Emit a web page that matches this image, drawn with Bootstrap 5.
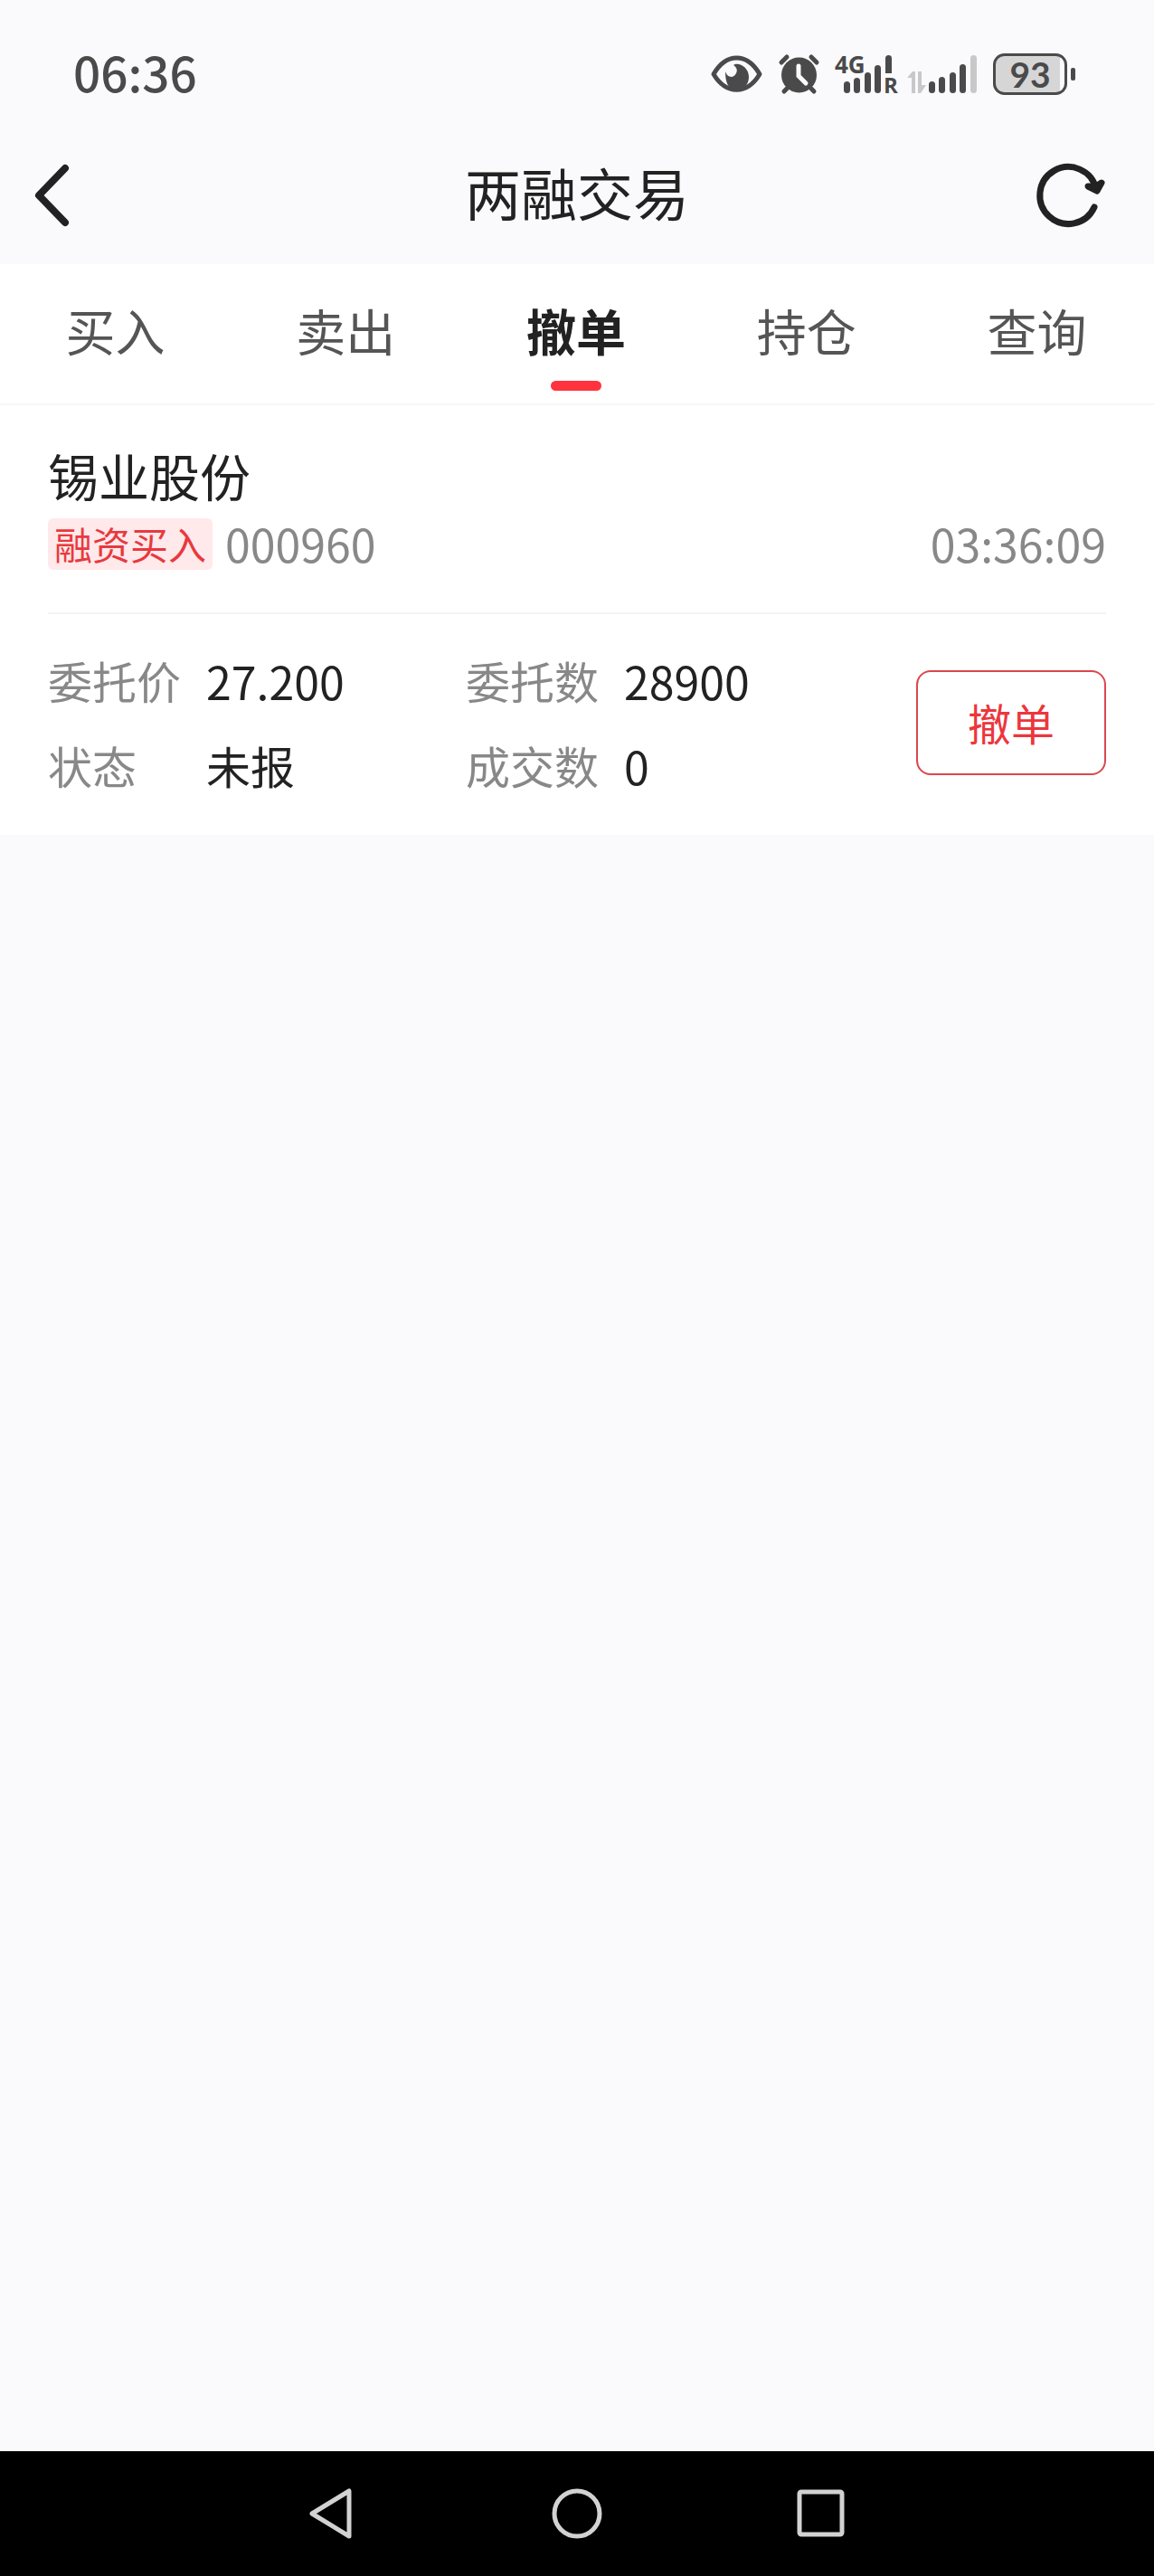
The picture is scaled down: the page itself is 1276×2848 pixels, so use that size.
<!DOCTYPE html>
<html lang="zh-CN">
<head>
<meta charset="utf-8">
<meta name="viewport" content="width=device-width, initial-scale=1">
<title>两融交易</title>
<link href="https://cdn.jsdelivr.net/npm/bootstrap@5.3.0/dist/css/bootstrap.min.css" rel="stylesheet">
<style>
  body { background: #fafafc; color: #222; font-family: "Noto Sans CJK SC", sans-serif; font-size: 49px; line-height: 72px; }
  svg { display: block; flex: none; overflow: visible; }
  .status-bar { height: 138px; padding: 28px 86px 0 81px; color: #4a4a4a; }
  .clock { padding-bottom: 8px; font-size: 53px; font-weight: 500; }
  .status-icons { gap: 16px; }
  .title-bar { height: 154px; padding: 0 51px 6px 36px; }
  .page-title { padding-left: 15px; font-size: 62px; line-height: 84px; font-weight: 400; }
  .icon-btn { width: 84px; height: 84px; padding: 0; border: 0; background: none; color: #222; }
  .tab-strip { height: 156px; padding-right: 2px; border-bottom: 2px solid #f7f7f8; }
  .tab-strip .nav-link { height: 140px; padding: 36px 0 0; font-size: 55px; color: #555; border-radius: 0; }
  .tab-strip .nav-link.active { color: #222; font-weight: 700; }
  .tab-strip .nav-link.active::after { content: ""; display: block; width: 56px; height: 11px; margin: 21px auto 0; border-radius: 6px; background: #ff333d; }
  .order-item { padding: 41px 53px 30px; }
  .order-head { padding-bottom: 47px; border-bottom: 2px solid #f3f3f4; }
  .stock-name { font-size: 56px; line-height: 72px; font-weight: 400; }
  .stock-meta { height: 57px; margin-top: 12px; }
  .side-tag { padding: 1px 7px 0; border-radius: 6px; background: #ffe9ea; color: #e8393f; font-size: 42px; line-height: 54px; height: 57px; }
  .digits { font-size: 50px; }
  .stock-meta .digits { padding-bottom: 4px; }
  .muted-ink { color: #888; }
  .stock-code { margin-left: 14px; }
  .order-body { padding-top: 26px; }
  .order-facts > div { width: 462px; }
  .fact { height: 94px; line-height: 94px; }
  .fact dt { width: 175px; font-weight: 400; }
  .fact dd { margin: 0; }
  .cancel-btn { width: 210px; height: 116px; padding: 0 0 3px; border: 2px solid #d9484f; border-radius: 16px; font-size: 48px; color: #ec363d; background: #fff; }
  .system-nav { height: 138px; gap: 214px; background: #000; color: #d2d2d2; }
  .system-nav .icon-btn { width: 56px; height: 60px; color: inherit; }
</style>
<script src="https://cdn.jsdelivr.net/npm/bootstrap@5.3.0/dist/js/bootstrap.bundle.min.js"></script>
</head>
<body class="d-flex flex-column min-vh-100">
<div class="status-bar d-flex justify-content-between align-items-center">
  <div class="clock">06:36</div>
  <div class="status-icons d-flex align-items-center">
    <svg width="60" height="50" viewBox="784 58 60 50" fill="none" stroke="currentColor" stroke-width="5" aria-label="护眼模式" role="img">
      <path d="M789 82C803 58 826 58 840 82C826 105 803 105 789 82Z" stroke-linejoin="round"/>
      <path d="M811 72C816 68 828 74 828 85C828 92 824 99 814 99C806 99 802 93 802 79C804 86 811 87 814 81C816 77 814 74 811 72Z" fill="currentColor" stroke="none"/>
    </svg>
    <svg width="48" height="50" viewBox="860 58 48 50" fill="none" stroke="currentColor" stroke-width="5" stroke-linecap="round" aria-label="闹钟" role="img">
      <circle cx="883.500" cy="83" r="19.500" fill="currentColor" stroke="none"/>
      <path d="M864 69L870 63M897 63L903 69M870 98L867 101M897 98L900 101"/>
      <path d="M883 73V84L891 92" stroke="#fafafc"/>
    </svg>
    <svg width="64" height="50" viewBox="924 58 64 50" fill="currentColor" aria-label="移动网络一" role="img">
      <text x="923" y="81" font-family="Open Sans, sans-serif" font-weight="700" font-size="26">4G</text>
      <rect x="933" y="90" width="7" height="13" rx="3.500"/><rect x="944" y="86" width="7" height="17" rx="3.500"/>
      <rect x="956" y="80" width="7" height="23" rx="3.500"/><rect x="967" y="72" width="7" height="31" rx="3.500"/>
      <path d="M979 81V64.500a3.500 3.500 0 0 1 7 0V81Z"/>
      <text x="977" y="103" font-family="Open Sans, sans-serif" font-weight="700" font-size="24">R</text>
    </svg>
    <svg width="76" height="50" viewBox="1004 58 76 50" fill="currentColor" aria-label="移动网络二" role="img">
      <path d="M1003 86L1009 79H1012V103H1008V86ZM1015 79H1019V94H1024L1018 103H1015Z" fill="#c8c8c9"/>
      <rect x="1027" y="90" width="7" height="13" rx="3.500"/><rect x="1038" y="85" width="7" height="18" rx="3.500"/>
      <rect x="1050" y="80" width="7" height="23" rx="3.500"/><rect x="1061" y="71" width="7" height="32" rx="3.500"/>
      <rect x="1073" y="61" width="7" height="42" rx="3.500" fill="#c8c8c9"/>
    </svg>
    <svg width="94" height="50" viewBox="1096 58 94 50" aria-label="电量 93%" role="img">
      <path d="M1110 61H1172V103H1110Q1100 103 1100 92V72Q1100 61 1110 61Z" fill="#d6d6d7"/>
      <rect x="1099.500" y="60.500" width="79" height="43" rx="11" fill="none" stroke="currentColor" stroke-width="3"/>
      <rect x="1184" y="75" width="5" height="14" rx="2" fill="currentColor"/>
      <text x="1139" y="97" text-anchor="middle" font-family="Lato, sans-serif" font-weight="700" font-size="39" fill="currentColor">93</text>
    </svg>
  </div>
</div>

<header class="title-bar d-flex justify-content-between align-items-center">
  <button class="icon-btn" type="button" aria-label="返回">
    <svg width="84" height="84" viewBox="0 0 84 84" fill="none" stroke="currentColor" stroke-width="8" stroke-linecap="round" stroke-linejoin="round"><path d="M36 16L7 46L36 76"/></svg>
  </button>
  <h1 class="page-title m-0">两融交易</h1>
  <button class="icon-btn" type="button" aria-label="刷新">
    <svg width="84" height="84" viewBox="0 0 84 84" fill="none" stroke="currentColor" stroke-width="7" stroke-linecap="round" stroke-linejoin="round"><path d="M69 59A31.500 31.500 0 1 1 71 39"/><path d="M62 36L72 41L77 32L71 36Z" fill="currentColor"/></svg>
  </button>
</header>

<nav class="tab-strip nav nav-fill flex-nowrap bg-white" aria-label="交易">
  <a class="nav-link w-100" href="#buy">买入</a>
  <a class="nav-link w-100" href="#sell">卖出</a>
  <a class="nav-link w-100 active" href="#cancel" aria-current="page">撤单</a>
  <a class="nav-link w-100" href="#position">持仓</a>
  <a class="nav-link w-100" href="#query">查询</a>
</nav>

<main class="flex-grow-1">
  <article class="order-item bg-white">
    <div class="order-head">
      <h2 class="stock-name m-0">锡业股份</h2>
      <div class="stock-meta d-flex align-items-center">
        <span class="side-tag">融资买入</span>
        <span class="stock-code digits muted-ink">000960</span>
        <time class="digits muted-ink ms-auto">03:36:09</time>
      </div>
    </div>
    <div class="order-body d-flex align-items-center justify-content-between">
      <dl class="order-facts d-flex m-0">
        <div>
          <div class="fact d-flex"><dt class="muted-ink">委托价</dt><dd class="digits">27.200</dd></div>
          <div class="fact d-flex"><dt class="muted-ink">状态</dt><dd>未报</dd></div>
        </div>
        <div>
          <div class="fact d-flex"><dt class="muted-ink">委托数</dt><dd class="digits">28900</dd></div>
          <div class="fact d-flex"><dt class="muted-ink">成交数</dt><dd class="digits">0</dd></div>
        </div>
      </dl>
      <button class="cancel-btn btn" type="button">撤单</button>
    </div>
  </article>
</main>

<footer class="system-nav d-flex justify-content-center align-items-center">
  <button class="icon-btn" type="button" aria-label="系统返回"><svg width="56" height="60" viewBox="0 0 56 60" fill="none" stroke="currentColor" stroke-width="5" stroke-linejoin="round"><path d="M5 30L46 5V55Z"/></svg></button>
  <button class="icon-btn" type="button" aria-label="主屏幕"><svg width="56" height="60" viewBox="0 0 56 60" fill="none" stroke="currentColor" stroke-width="5"><circle cx="28" cy="30" r="25"/></svg></button>
  <button class="icon-btn" type="button" aria-label="最近任务"><svg width="56" height="60" viewBox="0 0 56 60" fill="none" stroke="currentColor" stroke-width="5"><rect x="4" y="6" width="47" height="47" rx="2"/></svg></button>
</footer>
</body>
</html>
